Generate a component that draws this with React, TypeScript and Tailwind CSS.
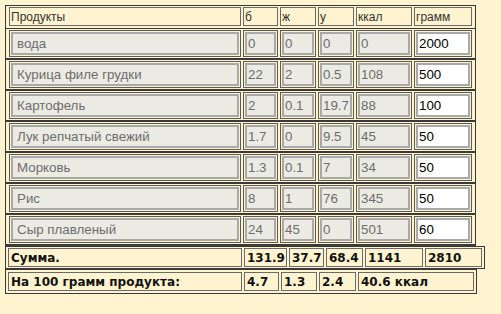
const rows = [
  { name: 'вода', b: '0', zh: '0', u: '0', kcal: '0', g: '2000' },
  { name: 'Курица филе грудки', b: '22', zh: '2', u: '0.5', kcal: '108', g: '500' },
  { name: 'Картофель', b: '2', zh: '0.1', u: '19.7', kcal: '88', g: '100' },
  { name: 'Лук репчатый свежий', b: '1.7', zh: '0', u: '9.5', kcal: '45', g: '50' },
  { name: 'Морковь', b: '1.3', zh: '0.1', u: '7', kcal: '34', g: '50' },
  { name: 'Рис', b: '8', zh: '1', u: '76', kcal: '345', g: '50' },
  { name: 'Сыр плавленый', b: '24', zh: '45', u: '0', kcal: '501', g: '60' },
];

const widths = ['w-[232px]', 'w-[35px]', 'w-[36px]', 'w-[36px]', 'w-[56px]', 'w-[58px]'];

function Field({ value, editable, wide }: { value: string; editable?: boolean; wide?: boolean }) {
  return (
    <input
      defaultValue={value}
      readOnly={!editable}
      className={
        'block w-full h-[23px] border-2 border-[#a9a9a9] outline-none text-[13.33px] font-["Liberation_Sans",Arial,sans-serif] ' +
        (wide ? 'px-[4px] ' : 'px-[1px] ') +
        (editable ? 'bg-white text-black' : 'bg-[#ebebe4] text-[#6d6d6d]')
      }
    />
  );
}

function SumCell({ w, children }: { w: string; children: React.ReactNode }) {
  return (
    <div className={`${w} h-[19px] border border-[#6a6a6a] px-[2px] flex items-center whitespace-nowrap`}>{children}</div>
  );
}

export default function App() {
  return (
    <div className="min-h-screen w-full bg-[#fff4cf] pt-[5px] font-['DejaVu_Sans',Verdana,sans-serif]">
      {/* main table */}
      <div className="ml-[5px] w-[471px] border border-[#3a3a3a] pt-[1px]">
        <div className="flex gap-[2px] px-[3px] mb-[2px] text-[12px] text-[#333] font-['Liberation_Sans',Arial,sans-serif]">
          {['Продукты', 'б', 'ж', 'у', 'ккал', 'грамм'].map((h, i) => (
            <div key={h} className={`${widths[i]} h-[19px] border border-[#6a6a6a] px-[1px] flex items-center`}>
              {h}
            </div>
          ))}
        </div>
        {rows.map((r) => (
          <div key={r.name} className="flex gap-[2px] px-[3px] py-[1px] border-y border-[#3a3a3a]">
            {[r.name, r.b, r.zh, r.u, r.kcal, r.g].map((v, i) => (
              <div key={i} className={`${widths[i]} border border-[#5a5a5a] p-[1px]`}>
                <Field value={v} editable={i === 5} wide={i === 0} />
              </div>
            ))}
          </div>
        ))}
      </div>

      {/* totals */}
      <div className="ml-[5px] w-[480px] border border-[#3a3a3a] p-[1px] px-[2px] flex gap-[2px] text-[12px] font-bold text-[#111]">
        <SumCell w="w-[234px]">Сумма.</SumCell>
        <SumCell w="w-[43px]">131.9</SumCell>
        <SumCell w="w-[35px]">37.7</SumCell>
        <SumCell w="w-[37px]">68.4</SumCell>
        <SumCell w="w-[58px]">1141</SumCell>
        <SumCell w="w-[57px]">2810</SumCell>
      </div>

      <div className="ml-[5px] w-[472px] border border-[#3a3a3a] p-[2px] flex gap-[2px] text-[12px] font-bold text-[#111]">
        <SumCell w="w-[234px]">На 100 грамм продукта:</SumCell>
        <SumCell w="w-[35px]">4.7</SumCell>
        <SumCell w="w-[36px]">1.3</SumCell>
        <SumCell w="w-[37px]">2.4</SumCell>
        <SumCell w="w-[116px]">40.6 ккал</SumCell>
      </div>
    </div>
  );
}
